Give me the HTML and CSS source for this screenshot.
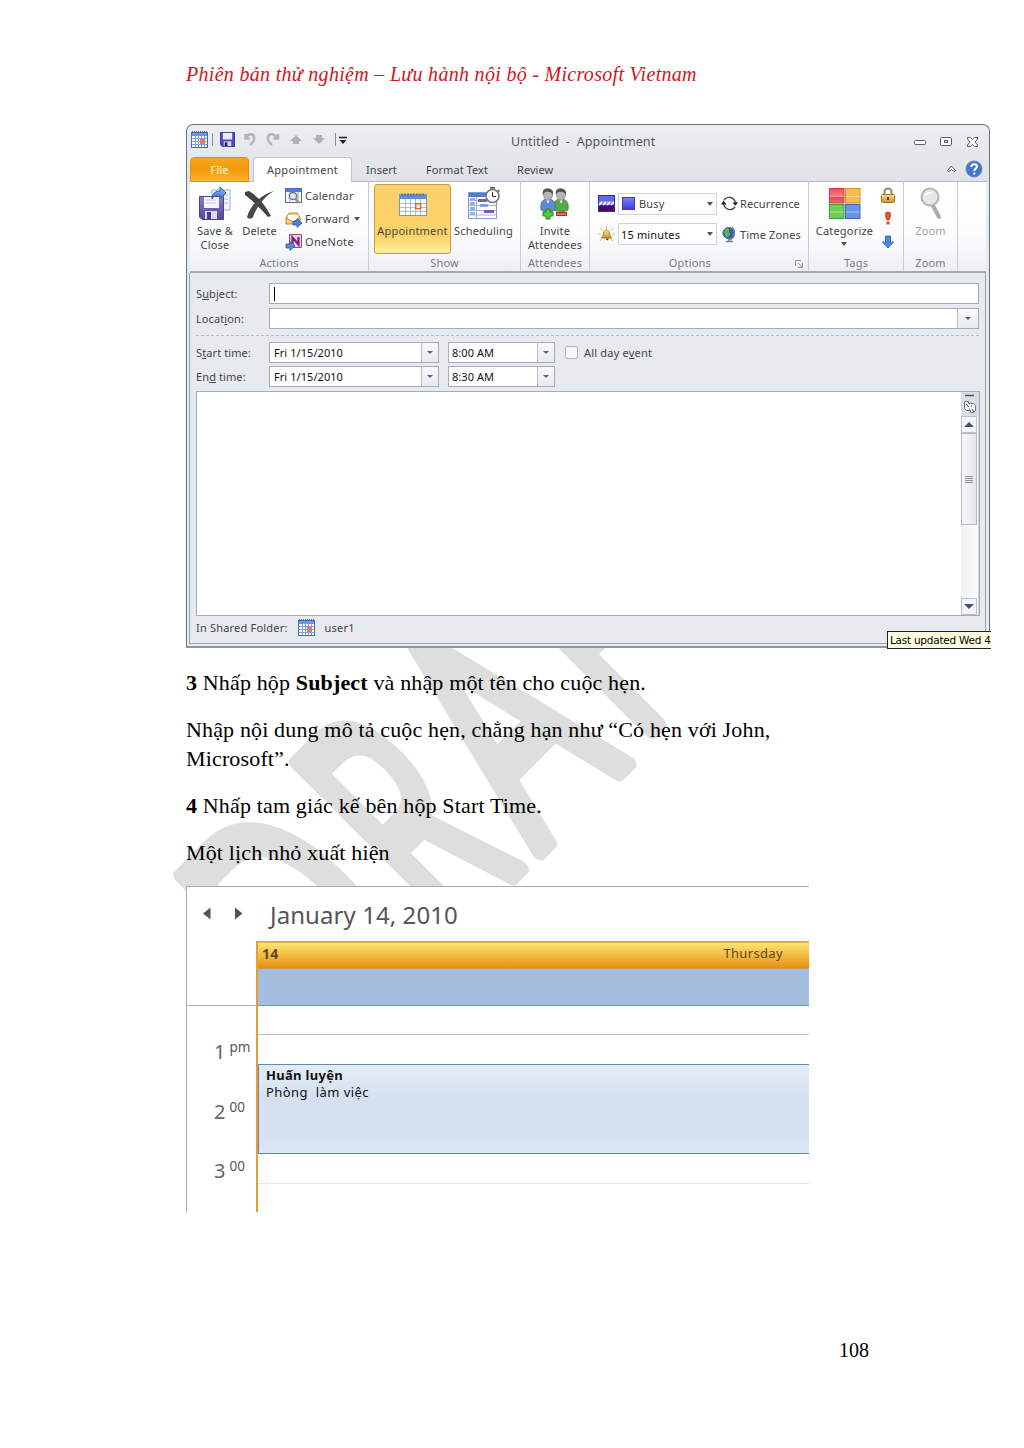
FILE: index.html
```html
<!DOCTYPE html>
<html lang="vi">
<head>
<meta charset="utf-8">
<title>Microsoft Vietnam - 108</title>
<link rel="stylesheet" href="styles.css">
</head>
<body>
<svg class="defs" width="0" height="0" aria-hidden="true">
  <defs>
    <linearGradient id="redG" x2="0" y2="1"><stop stop-color="#e8525a"/><stop offset=".5" stop-color="#f5787c"/><stop offset=".52" stop-color="#e0434c"/><stop offset="1" stop-color="#f06a6e"/></linearGradient>
    <linearGradient id="blueG" x2="0" y2="1"><stop stop-color="#9cb9ee"/><stop offset="1" stop-color="#3a6fd0"/></linearGradient>
    <linearGradient id="purpleG" x2="0" y2="1"><stop stop-color="#8b7bc4"/><stop offset="1" stop-color="#54489b"/></linearGradient>
    <linearGradient id="goldG" x2="0" y2="1"><stop stop-color="#f9e29a"/><stop offset="1" stop-color="#c8922a"/></linearGradient>
    <symbol id="calendar" viewBox="0 0 28 24">
      <rect x=".5" y="2.5" width="27" height="21" fill="#fff" stroke="#7f95b5"/>
      <path d="M1 3h26v4H1z" fill="#5f8fdc"/>
      <path d="M3 1.5v2M6 1.5v2M9 1.5v2M12 1.5v2M15 1.5v2M18 1.5v2M21 1.5v2M24 1.5v2" stroke="#55647e" stroke-width="1.4"/>
      <path d="M1 11.5h26M1 15.5h26M1 19.5h26M6.5 7v16M11.5 7v16M16.5 7v16M21.500 7v16" stroke="#a9bbd5"/>
      <rect x="16.700" y="11.700" width="5" height="5" fill="#fff0ea" stroke="#e25a34" stroke-width="1.3"/>
    </symbol>
    <symbol id="minical" viewBox="0 0 17 17">
      <rect x=".5" y="1.500" width="16" height="15" fill="#fff" stroke="#4a6db5"/>
      <path d="M1 2h15v3H1z" fill="#6d97dd"/>
      <path d="M1 .8h15" stroke="#39435c" stroke-dasharray="1 1"/>
      <path d="M1 7.500h15M1 10.500h15M1 13.500h15M4.500 5v11M7.500 5v11M10.500 5v11M13.500 5v11" stroke="#7f9fd6"/>
      <path d="M9 8h5v5H9z" fill="#e07a68"/>
    </symbol>
    <symbol id="floppy" viewBox="0 0 16 16"><path d="M.5.5h15v15H2.500l-2-2z" fill="#4a4dbb" stroke="#35388f"/><path d="M3 1h10v7H3z" fill="#e9edfb"/><path d="M4 10h8v5H4z" fill="#d7daf0"/><path d="M5 11h3v4H5z" fill="#26285f"/></symbol>
    <symbol id="person" viewBox="0 0 16 24"><path d="M1 22c-1-7 1-10 5-11h4c4 1 6 5 5 11-3 2-11 2-14 0z" stroke-width=".8" stroke="#667"/><path d="m6 11 2 5 2-5z" fill="#eef3fa"/><ellipse cx="8" cy="6.500" rx="4.500" ry="5.700" fill="#b5b5b5" stroke="#777" stroke-width=".6"/><path d="M3 7C2 1 5 .3 8 .5c4 0 6 3 4.800 7C12 4 9 4 6 3.800 4 4 4 6 3 7z" fill="#555"/></symbol>
  </defs>
</svg>

<div class="page">
  <svg class="watermark" width="1024" height="1448" aria-hidden="true">
    <g transform="rotate(-45)">
      <text transform="translate(-513 980) scale(.62 1)">D</text>
      <text transform="translate(-349 982) scale(.54 1)">R</text>
      <text transform="translate(-223 984) scale(.63 1)">A</text>
      <text transform="translate(-76 977) scale(.55 1)">F</text>
    </g>
  </svg>

  <header class="doc-head">Phiên bản thử nghiệm – Lưu hành nội bộ - Microsoft Vietnam</header>

  <section class="window">
    <div class="titlebar">
      <svg class="quick" width="170" height="22" viewBox="0 0 170 22">
        <use href="#minical" x="1" y="3" width="17" height="17"/>
        <path d="M22.500 5v13" stroke="#8b929b"/>
        <use href="#floppy" x="30" y="4" width="15" height="15"/>
        <path d="M55.500 6v4.500h4.500M56 10c3-6 9-4 8 1 0 3-2 4-4 6" fill="none" stroke="#b3b6ba" stroke-width="2.600"/>
        <path d="M88 6v4.500h-4.500M87 10c-4-6-10-4-9 1 0 3 2 4 4 6" fill="none" stroke="#b3b6ba" stroke-width="2.600"/>
        <path d="m106 7 6 6h-3v3h-6v-3h-3z" fill="#aeb1b5"/>
        <path d="m129 16 6-6h-3V7h-6v3h-3z" fill="#aeb1b5"/>
        <path d="M145.500 5v13" stroke="#8b929b"/>
        <path d="M149 9.500h8" stroke="#222" stroke-width="1.500"/><path d="M149.500 12h7l-3.500 4z" fill="#222"/>
      </svg>
      <h1>Untitled&nbsp; - &nbsp;Appointment</h1>
      <svg class="controls" width="70" height="16" viewBox="0 0 70 16" fill="#fff" stroke="#5a6068">
        <rect x="2.500" y="6.500" width="11" height="4" rx="1"/>
        <rect x="28.500" y="3.500" width="11" height="8" rx="1"/><rect x="32.500" y="6.500" width="3" height="2" fill="#ddd"/>
        <path d="M55.500 3.500h3l2 2 2-2h3v1.500L63 8l2.500 3v1.500h-3l-2-2-2 2h-3V11L58 8l-2.500-3z"/>
      </svg>
    </div>
    <nav class="tabs">
      <span class="tab file">File</span><span class="tab active">Appointment</span><span class="tab t-insert">Insert</span><span class="tab t-format">Format Text</span><span class="tab t-review">Review</span>
      <svg class="help" width="40" height="20" viewBox="0 0 40 20"><path d="m2.500 11.500 4-4.500 4 4.500c-.5 1.500-2 1-4-1-2 2-3.500 2.500-4 1z" fill="#fff" stroke="#5a6068"/><circle cx="29" cy="10" r="8" fill="#4478c8" stroke="#5c8ad0"/><path d="M26.300 8c0-4 5.700-3.500 5.700-.5 0 2-2.700 2-2.700 4.500M29.300 13.500v2" fill="none" stroke="#fff" stroke-width="2"/></svg>
    </nav>

    <div class="ribbon">
      <div class="group g-actions">
        <div class="group-body">
          <div class="big save"><svg width="34" height="34" viewBox="0 0 34 34"><path d="M14 3h18v20H14z" fill="#f3f7fd" stroke="#9cafd0"/><path d="M22 8h8M22 12h8M22 16h8" stroke="#a9bddc"/><path d="M1.500 9.500h24v23H4l-2.500-2.500z" fill="url(#purpleG)" stroke="#4d4190"/><path d="M6 10h15v11H6z" fill="#f4f4fa"/><path d="M8 13h10M8 16h10" stroke="#c5c5d6"/><path d="M7 24h12v8H7z" fill="#dcdaf0"/><path d="M9 25h4v7H9z" fill="#453b87"/><path d="M14 12c0-6 4-8 8-8V0l6 6-6 6V8c-4 0-6 1-8 4z" fill="url(#blueG)" stroke="#315fb4"/></svg><span>Save &amp;<br>Close</span></div>
          <div class="big delete"><svg width="34" height="34" viewBox="0 0 34 34"><path d="M2 5l4-1c7 4 16 13 22 25l-3 1C17 21 9 13 2 8z" fill="#444"/><path d="M31 4C22 9 14 19 10 30c-1 2-5 2-6 0C7 19 17 8 31 4z" fill="#4a4a4a"/></svg><span>Delete</span></div>
          <div class="list">
            <div><svg width="18" height="18" viewBox="0 0 18 18"><rect x=".5" y="1.500" width="16" height="14" fill="#f6f9fe" stroke="#4a6db5"/><path d="M1 2h15v3H1z" fill="#4d7ed0"/><path d="M3 8h11M3 11h11M5 5v10M13 5v10" stroke="#8eabdb"/><circle cx="8" cy="9" r="3.500" fill="#e5eef8" stroke="#66788c" stroke-width="1.300"/><path d="m10.500 12 3.500 4" stroke="#c98a2b" stroke-width="2.200"/></svg><span>Calendar</span></div>
            <div><svg width="18" height="18" viewBox="0 0 18 18"><path d="M1 7.500 4 3h8l3 4.500V14H1z" fill="#f5d079" stroke="#b18a3c"/><path d="M3 5h10v4l-5 3-5-3z" fill="#fff"/><path d="m1 8 7 4 7-4" fill="none" stroke="#b18a3c"/><path d="M8 11h4V8.500l5 4.500-5 4.500V15H8z" fill="#4d84dd" stroke="#2a57a6" stroke-width=".8"/></svg><span>Forward</span><i class="arrow"></i></div>
            <div><svg width="18" height="18" viewBox="0 0 18 18"><path d="M4.500 1.500h12v13h-12z" fill="#ecd0e8" stroke="#9c4a94"/><path d="M7.500 12V4.500l6 7V4" fill="none" stroke="#7b2477" stroke-width="2.200"/><path d="M1 11h4V8.500l5 4.500-5 4.500V15H1z" fill="#5a8ae0" stroke="#2a57a6" stroke-width=".8"/></svg><span>OneNote</span></div>
          </div>
        </div>
        <div class="group-name">Actions</div>
      </div>
      <div class="group g-show">
        <div class="group-body">
          <div class="big pick"><svg width="28" height="34" viewBox="0 0 28 34"><use href="#calendar" x="0" y="5" width="28" height="24"/></svg><span>Appointment</span></div>
          <div class="big sched"><svg width="34" height="34" viewBox="0 0 34 34"><rect x="1.500" y="5.500" width="28" height="26" fill="#fff" stroke="#7f9fd0"/><path d="M2 6h27v4H2z" fill="#4d7ed0"/><path d="M2 13.500h27M2 18.500h27M2 23.500h27M2 28h27M9.500 10v21" stroke="#9db6dd"/><path d="M3 11h5v2H3zM3 15h5v3H3zM3 20h5v3H3zM3 25h5v3H3z" fill="#8fb0e6"/><path d="M11 12h9v3h-9zM17 23h10v3H17z" fill="#7f5a9e"/><path d="M13 17h8v3h-8z" fill="#7d9fe6"/><path d="M25.500 0v3M23 .800h5M31 3l1.500 1.500" stroke="#555" stroke-width="1.500"/><circle cx="25.500" cy="9" r="6.500" fill="#fafafa" stroke="#70767e" stroke-width="1.500"/><path d="M25.500 5v4.500h3.500" fill="none" stroke="#333"/></svg><span>Scheduling</span></div>
        </div>
        <div class="group-name">Show</div>
      </div>
      <div class="group g-att">
        <div class="group-body">
          <div class="big invite"><svg width="32" height="34" viewBox="0 0 32 34"><use href="#person" x="14" y="1" width="16" height="24" fill="#57a847"/><use href="#person" x="1" y="1" width="16" height="24" fill="#5c8bd8"/><path d="M7 22h4v3h3v4h-3v3H7v-3H4v-4h3z" fill="#56c83a" stroke="#21801a"/><rect x="17.500" y="25.500" width="10" height="3" fill="#f06b4a" stroke="#b62d19"/></svg><span>Invite<br>Attendees</span></div>
        </div>
        <div class="group-name">Attendees</div>
      </div>
      <div class="group g-opt">
        <div class="group-body options">
          <div class="opt-row"><svg width="17" height="17" viewBox="0 0 17 17"><path d="M0 0h17v17H0z" fill="#3c2c9a"/><path d="M1 1h15v5H1z" fill="#6668e0"/><path d="M1 6h15v4H1z" fill="#8e8ee6"/><path d="m1 10 3-3M5 10l3-3M9 10l3-3M13 10l3-3" stroke="#fff" stroke-width="1.500"/><path d="M1 11h15v5H1z" fill="#4b0a6b"/></svg><div class="combo"><b class="busy"></b><span>Busy</span><i class="arrow"></i></div><svg width="17" height="17" viewBox="0 0 17 17"><path d="M3 5a6.300 6.300 0 0 1 11.300 2.500M14 12A6.300 6.300 0 0 1 2.700 9" fill="none" stroke="#444" stroke-width="1.400"/><path d="m11.500 7.500 5.500-.5-2.500 3.800zM0 9.500l2.500-4 3 4z" fill="#222"/></svg><span class="lbl">Recurrence</span></div>
          <div class="opt-row"><svg width="17" height="17" viewBox="0 0 17 17"><path d="M2 2l3 3M15 2l-3 3M8.500 0v3M0 8h3M14 8h3M2 15l2-2M15 15l-2-2" stroke="#f3ba63"/><path d="M3 12c2-1 2-3 2.500-5 1-4 5-4 6 0 .5 2 .5 4 2.500 5z" fill="url(#goldG)" stroke="#a36b16" stroke-width=".8"/><path d="M7 12.500h4l-1.500 2z" fill="#6b3d10"/></svg><div class="combo dark"><span>15 minutes</span><i class="arrow"></i></div><svg width="17" height="17" viewBox="0 0 17 17"><circle cx="7.500" cy="7" r="5.500" fill="#2f62a5" stroke="#3a597e"/><path d="M4 3c3-2 5 0 4 2s2 2 1 4-3 1-3 3c-3-2-1-3-3-5z" fill="#5db261"/><path d="M11 1c4 4 3 11-3 13M8 13v2M5 15.500h7" fill="none" stroke="#717fa5" stroke-width="1.500"/></svg><span class="lbl">Time Zones</span></div>
        </div>
        <div class="group-name with-launch"><span>Options</span><svg width="8" height="8" viewBox="0 0 8 8"><path d="M.5 6V.5H6M3 3l4 4M7.500 3v4.500H3" fill="none" stroke="#8d949c"/></svg></div>
      </div>
      <div class="group g-tags">
        <div class="group-body">
          <div class="big cat"><svg width="32" height="34" viewBox="0 0 32 34"><rect x=".5" y="1.500" width="14.500" height="14.500" fill="url(#redG)" stroke="#c93e44"/><rect x="16.500" y="1.500" width="14.500" height="14.500" fill="#f6ba50" stroke="#d18d28"/><rect x=".5" y="17.500" width="14.500" height="14" fill="#6ccf58" stroke="#3d9d36"/><rect x="16.500" y="17.500" width="14.500" height="14" fill="#6794e6" stroke="#3c68bd"/><path d="M1 9.500h14M17 9.500h14M1 25h14M17 25h14" stroke="#fff" opacity=".45"/></svg><span>Categorize<br><i class="arrow"></i></span></div>
          <svg class="tagicons" width="16" height="66" viewBox="0 0 16 66"><path d="M4.500 8V5a3.500 3.500 0 0 1 7 0v3" fill="none" stroke="#8f8a70" stroke-width="2"/><rect x="1.500" y="7.500" width="13" height="8" rx="1" fill="url(#goldG)" stroke="#a17822"/><path d="M8 10v3" stroke="#553b0c" stroke-width="2"/><path d="M8 25c4 0 3 3 1.300 8H6.700C5 28 4 25 8 25z" fill="#e6502c" stroke="#b03a1b" stroke-width=".6"/><circle cx="8" cy="36" r="1.800" fill="#d9542f"/><path d="M5.500 49h5v6h3L8 61 2.500 55h3z" fill="#4f86e0" stroke="#2c5ab0" stroke-width=".8"/></svg>
        </div>
        <div class="group-name">Tags</div>
      </div>
      <div class="group g-zoom">
        <div class="group-body">
          <div class="big zoom"><svg width="24" height="34" viewBox="0 0 24 34"><path d="m13 17 7 13" stroke="#aaa" stroke-width="4" stroke-linecap="round"/><circle cx="11" cy="10" r="8.500" fill="#e6e6e6" stroke="#b5b5b5" stroke-width="2"/><path d="M5 10c1-5 6-6 10-4-4 0-7 1-10 4z" fill="#fff"/></svg><span>Zoom</span></div>
        </div>
        <div class="group-name">Zoom</div>
      </div>
    </div>

    <div class="form">
      <div class="field subject"><label>S<u>u</u>bject:</label><div class="box wide"><i class="caret"></i></div></div>
      <div class="field location"><label>Locat<u>i</u>on:</label><div class="box wide"><b class="drop"><i class="arrow"></i></b></div></div>
      <div class="rule"></div>
      <div class="field start"><label>S<u>t</u>art time:</label><div class="box date"><span>Fri 1/15/2010</span><b class="drop"><i class="arrow"></i></b></div><div class="box time"><span>8:00 AM</span><b class="drop"><i class="arrow"></i></b></div><i class="check"></i><span class="allday">All day e<u>v</u>ent</span></div>
      <div class="field end"><label>En<u>d</u> time:</label><div class="box date"><span>Fri 1/15/2010</span><b class="drop"><i class="arrow"></i></b></div><div class="box time"><span>8:30 AM</span><b class="drop"><i class="arrow"></i></b></div></div>
      <div class="editor">
        <div class="scroll">
          <svg width="17" height="24" viewBox="0 0 17 24"><path d="M4 3.500h9" stroke="#4a5059" stroke-width="1.500"/><path d="M3.500 9.500h4v2h5l2 2v5l-2 2h-3v-2h-4l-2-2z" fill="#fff" stroke="#6d747d"/><path d="M5 12l3 3M10 14h1M8 17h1M11 17l2 3" stroke="#444"/></svg>
          <b class="sbtn"><i class="up"></i></b>
          <b class="thumb"><i></i><i></i><i></i><i></i></b>
          <b class="sbtn last"><i class="down"></i></b>
        </div>
      </div>
      <div class="status"><span>In Shared Folder:</span><svg width="17" height="17"><use href="#minical" width="17" height="17"/></svg><span>user1</span></div>
    </div>
    <div class="tip">Last updated Wed 4</div>
  </section>

  <article class="copy">
    <p><b>3</b> Nhấp hộp <b>Subject</b> và nhập một tên cho cuộc hẹn.</p>
    <p>Nhập nội dung mô tả cuộc hẹn, chẳng hạn như “Có hẹn với John,<br>Microsoft”.</p>
    <p><b>4</b> Nhấp tam giác kế bên hộp Start Time.</p>
    <p>Một lịch nhỏ xuất hiện</p>
  </article>

  <section class="cal">
    <div class="cal-title"><svg width="42" height="14" viewBox="0 0 42 14"><path d="M8.500 .5v12L1 6.500z" fill="#555"/><path d="M33 .5v12l7.500-6z" fill="#555"/></svg><h2>January 14, 2010</h2></div>
    <div class="cal-grid">
      <div class="gutter">
        <div class="gutter-top"></div>
        <div class="hour"><span>1</span><sup>pm</sup></div>
        <div class="hour"><span>2</span><sup>00</sup></div>
        <div class="hour"><span>3</span><sup>00</sup></div>
      </div>
      <div class="day">
        <div class="day-head"><b>14</b><span>Thursday</span></div>
        <div class="all-day"></div>
        <div class="slot"></div>
        <div class="slot plain"></div>
        <div class="event"><b>Huấn luyện</b><span>Phòng&nbsp; làm việc</span></div>
        <div class="slot light"></div>
      </div>
    </div>
  </section>
  <footer>108</footer>
</div>
</body>
</html>
```
FILE: styles.css
```css
* { box-sizing: border-box; }
body { margin: 0; background: #fff; color: #000; }
.defs { display: block; height: 0; }
.page { position: relative; width: 1024px; height: 1448px; padding-left: 186px; overflow: hidden; font-family: "Liberation Serif", serif; display: flex; flex-direction: column; align-items: flex-start; }
.watermark { position: absolute; left: 0; top: 0; z-index: 0; }
.watermark text { font: 325px "Open Sans", sans-serif; fill: #dedede; stroke: #dedede; stroke-width: 14px; stroke-linejoin: round; vector-effect: non-scaling-stroke; }
.doc-head, .window, .copy, .cal, footer { position: relative; z-index: 1; }
.doc-head { margin-top: 62px; height: 62px; line-height: 25px; font-size: 20px; letter-spacing: .3px; font-style: italic; color: #d4141c; white-space: nowrap; }

/* Appointment window */
.window { width: 804px; height: 524px; flex: none; padding: 0 2px 0 3px; border: 1px solid #69757f; border-bottom: 2px solid #8d979f; border-radius: 7px 7px 0 0; background: linear-gradient(#eceef1, #dfe2e6 55px, #e7eaef 60px); font-family: "Noto Sans", "Open Sans", sans-serif; font-size: 11px; letter-spacing: .06px; color: #454545; }
.titlebar { height: 32px; display: flex; }
.quick { margin: 3px 0 0; flex: none; }
.titlebar h1 { margin: 0 0 0 151px; width: 145px; font-size: 12.500px; line-height: 33px; font-weight: 400; color: #555; white-space: nowrap; letter-spacing: .12px; }
.controls { margin: 9px 0 0 256px; flex: none; }
.tabs { height: 25px; display: flex; border-bottom: 1px solid #b4b9bf; }
.tab { line-height: 25px; height: 24px; white-space: nowrap; flex: none; }
.tab.file { width: 59px; height: 25px; text-align: center; color: #fff2cf; background: linear-gradient(#f9a51c, #f39a0b 50%, #ffb62c); border: 1px solid #e78b12; border-radius: 4px 4px 0 0; line-height: 24px; font-weight: 500; }
.tab.active { width: 99px; height: 25px; margin-left: 4px; text-align: center; background: #fff; border: 1px solid #c0c5cc; border-bottom: 0; border-radius: 4px 4px 0 0; line-height: 24px; letter-spacing: .25px; }
.t-insert { margin-left: 14px; width: 60px; }
.t-format { width: 91px; }
.t-review { width: 428px; }
.help { margin-top: 2px; flex: none; }
.ribbon { height: 91px; margin-right: 1px; display: flex; border-bottom: 2px solid #a3a9b0; background: linear-gradient(#fff, #fcfcfd 60%, #edeff2); }
.group { height: 89px; flex: none; border-right: 1px solid #c9cdd2; display: flex; flex-direction: column; }
.group-body { height: 73px; display: flex; }
.group-name { height: 16px; line-height: 16px; text-align: center; color: #777c85; letter-spacing: .2px; }
.g-actions { width: 179px; }
.g-show { width: 152px; }
.g-att { width: 69px; }
.g-opt { width: 219px; }
.g-tags { width: 95px; }
.g-zoom { width: 54px; }
.big { display: flex; flex-direction: column; align-items: center; padding-top: 5px; text-align: center; line-height: 14px; white-space: nowrap; letter-spacing: .2px; }
.big svg { flex: none; margin-bottom: 3px; }
.save { width: 50px; }
.delete { width: 39px; }
.list { padding: 2px 0 0 6px; }
.list div { height: 23px; display: flex; align-items: center; gap: 2px; letter-spacing: .3px; }
.arrow { display: inline-block; width: 0; height: 0; border: 3px solid transparent; border-top: 4px solid #555; border-bottom: 0; flex: none; }
.list .arrow { margin-left: 2px; }
.pick { width: 77px; height: 70px; margin: 2px 0 0 5px; padding-top: 2px; border: 1px solid #c6a03c; border-radius: 3px; background: linear-gradient(#fbd06b, #fdd468 75%, #ffee9c); }
.sched { width: 65px; }
.invite { width: 68px; }
.options { flex-direction: column; padding: 10.500px 0 0 8px; gap: 8px; }
.opt-row { height: 22.500px; display: flex; align-items: center; letter-spacing: .15px; }
.combo { width: 99px; height: 22px; margin: 0 4px 0 3px; border: 1px solid #cdd2dc; background: #fff; display: flex; align-items: center; padding: 0 3px 0 3px; }
.combo.dark { color: #111; padding-left: 2px; }
.combo .arrow { margin-left: auto; }
.busy { width: 13px; height: 13px; margin-right: 4px; border: 1px solid #3d3da8; background: linear-gradient(#8181f2, #3d3ddc); }
.lbl { margin-left: 2px; }
.with-launch { display: flex; justify-content: flex-end; align-items: center; padding-right: 5px; }
.with-launch svg { margin: 2px 0 0 84px; }
.cat { width: 71px; }
.cat .arrow { vertical-align: 3px; }
.tagicons { margin: 5px 0 0 0; }
.zoom { width: 53px; color: #a5a5a5; }

.form { height: 371px; margin-right: 1px; border: 1px solid #9aa2aa; border-top: 0; margin-left: -1px; padding: 10px 6px 0 6px; background: #e7eaef; display: flex; flex-direction: column; }
.field { display: flex; align-items: center; height: 21px; flex: none; line-height: 15px; }
.field label { width: 73px; white-space: nowrap; padding-bottom: 1px; letter-spacing: .1px; }
.box { height: 21px; border: 1px solid #a6acb3; background: #fff; display: flex; align-items: center; color: #111; white-space: nowrap; padding-left: 4px; }
.box span { padding-bottom: 1px; }
.wide { width: 711px; }
.caret { width: 1px; height: 14px; background: #000; }
.drop { align-self: stretch; width: 17px; margin-left: auto; border-left: 1px solid #b9bec6; background: linear-gradient(#f8f9fb, #e7eaf0); display: flex; align-items: center; justify-content: center; }
.wide .drop { width: 21px; }
.drop .arrow { border-width: 3px; border-bottom-width: 0; border-top-color: #56617d; }
.location { margin-top: 4px; }
.rule { height: 1px; margin: 6px 0 6px; background: repeating-linear-gradient(90deg, #b5bac0 0 3px, transparent 3px 5px); flex: none; }
.date { width: 170px; }
.time { width: 107px; margin-left: 9px; padding-left: 3px; }
.check { width: 13px; height: 13px; margin-left: 10px; border: 1px solid #b3b8bf; background: #f6f7f9; border-radius: 2px; }
.allday { margin-left: 6px; padding-bottom: 1px; letter-spacing: .2px; }
.end { margin-top: 3px; }
.editor { height: 225px; width: 784px; margin-top: 4px; flex: none; border: 1px solid #a6acb3; background: #fff; display: flex; justify-content: flex-end; }
.scroll { width: 18px; background: linear-gradient(90deg, #f0f1f3, #fcfcfc); border-right: 1px solid #d0d4da; display: flex; flex-direction: column; }
.scroll svg { background: #d9dfe8; display: block; flex: none; }
.sbtn { height: 17px; width: 16px; border: 1px solid #bcc1c8; background: #f2f4f7; display: flex; align-items: center; justify-content: center; flex: none; }
.up { border: 5px solid transparent; border-bottom: 5px solid #445078; border-top: 0; }
.down { border: 5px solid transparent; border-top: 5px solid #445078; border-bottom: 0; }
.thumb { height: 92px; width: 16px; border: 1px solid #b6bac0; background: linear-gradient(90deg, #f6f6f7, #e5e6e9); display: flex; flex-direction: column; align-items: center; justify-content: center; gap: 1px; flex: none; }
.thumb i { width: 8px; height: 1px; background: #8d9299; }
.last { margin-top: auto; }
.status { height: 23px; display: flex; align-items: center; gap: 10px; line-height: 22px; letter-spacing: .2px; }
.tip { position: absolute; left: 700px; top: 506px; width: 104px; height: 18px; padding-left: 2px; border: 1px solid #222; border-right: 0; background: #ffffe1; color: #000; font: 10.500px/16px "DejaVu Sans", sans-serif; letter-spacing: -.25px; white-space: nowrap; overflow: hidden; }

/* Instructions */
.copy { height: 238px; padding-top: 20px; font-size: 22px; line-height: 29px; white-space: nowrap; letter-spacing: .15px; }
.copy p { margin: 0 0 18px; }

/* Day view */
.cal { width: 623px; height: 326px; flex: none; border: solid #a4abb3; border-width: 1px 0 0 1px; background: #fff; font-family: "Noto Sans", "Open Sans", sans-serif; color: #555; }
.cal-title { height: 54px; display: flex; padding: 20px 0 0 15px; }
.cal-title h2 { margin: -11px 0 0 26px; font-size: 24px; letter-spacing: .08px; line-height: 38px; font-weight: 400; white-space: nowrap; }
.cal-grid { display: flex; height: 271px; }
.gutter { width: 69px; flex: none; }
.gutter-top { height: 65px; border-bottom: 1px solid #a9aeb5; margin-bottom: 29px; }
.hour { height: 59.500px; display: flex; padding-left: 27px; line-height: 34px; }
.hour span { font-size: 20px; width: 15.500px; color: #666; }
.hour sup { font-size: 13.500px; line-height: 24px; vertical-align: baseline; }
.day { flex: 1; border-left: 2px solid #e2a036; }
.day-head { height: 28px; padding: 0 26px 0 4px; border-top: 2px solid #d6ad50; border-bottom: 1px solid #c79c58; display: flex; justify-content: space-between; line-height: 21px; font-size: 13px; letter-spacing: .35px; color: #5c4a1f; background: linear-gradient(#ffe474, #e88f0e); }
.day-head b { font-size: 14px; }
.all-day { height: 37px; background: #a4bee0; border-bottom: 1px solid #6e94c8; }
.slot { height: 29px; border-bottom: 1px solid #b0c0da; }
.slot.plain { height: 29px; border: 0; }
.event { height: 90px; border: solid #6286b8; border-width: 1px 0 1px 1px; padding: 2px 0 0 7px; display: flex; flex-direction: column; font-size: 13px; line-height: 17px; color: #111; background: linear-gradient(#e4ecf5, #d5e0f0 40%, #d5e0f0 80%, #dce7f3); }
.event b { letter-spacing: .3px; }
.event span { letter-spacing: .45px; }
.slot.light { height: 30px; border-color: #dfe6f0; }
footer { margin: 126px 0 0 653px; font-size: 20px; line-height: 25px; }
```
